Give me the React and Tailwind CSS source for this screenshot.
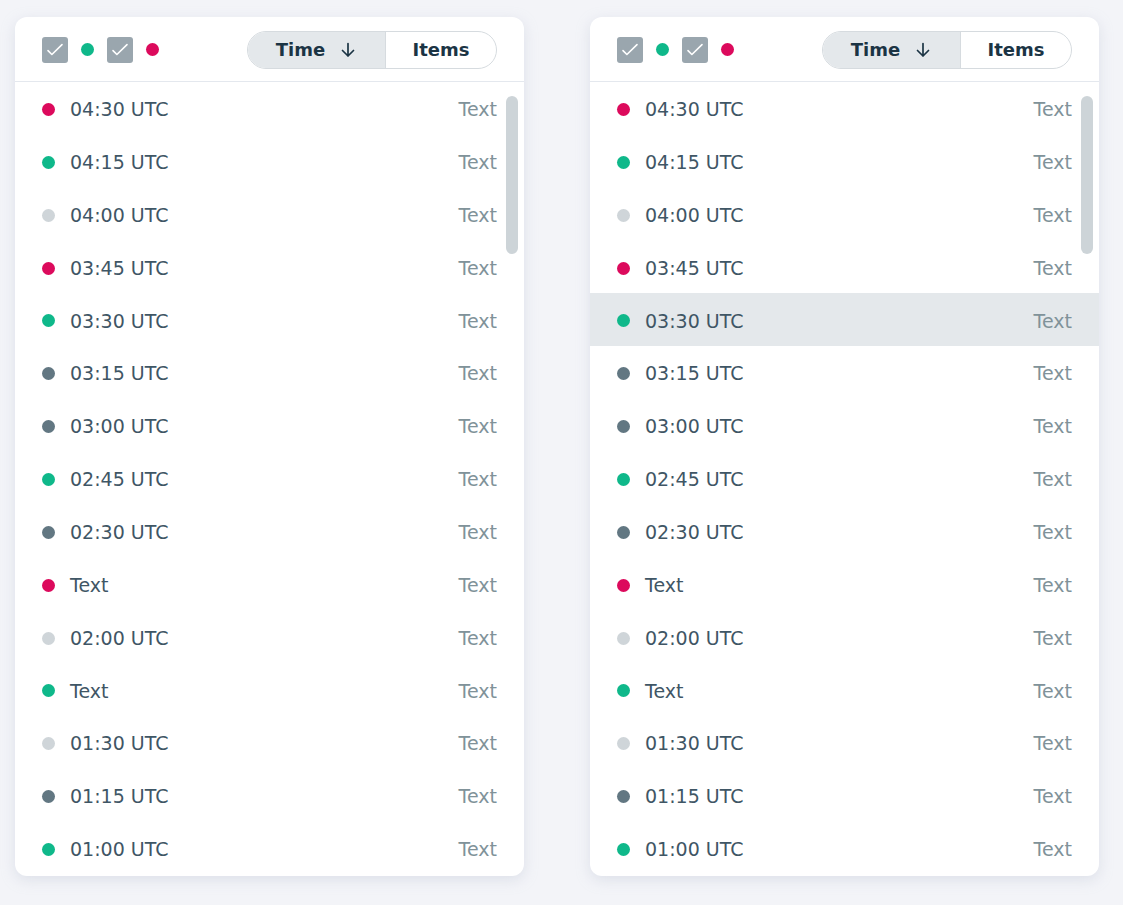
import React from 'react';

const DOT = {
  red: 'bg-[#dc0a5c]',
  green: 'bg-[#0fb88a]',
  light: 'bg-[#cfd5d9]',
  dark: 'bg-[#627782]',
};

const rows = [
  ['red', '04:30 UTC'],
  ['green', '04:15 UTC'],
  ['light', '04:00 UTC'],
  ['red', '03:45 UTC'],
  ['green', '03:30 UTC'],
  ['dark', '03:15 UTC'],
  ['dark', '03:00 UTC'],
  ['green', '02:45 UTC'],
  ['dark', '02:30 UTC'],
  ['red', 'Text'],
  ['light', '02:00 UTC'],
  ['green', 'Text'],
  ['light', '01:30 UTC'],
  ['dark', '01:15 UTC'],
  ['green', '01:00 UTC'],
];

const Check = () => (
  <span className="w-[26px] h-[26px] rounded-[3px] bg-[#9aa6ae] flex items-center justify-center">
    <svg width="26" height="26" viewBox="0 0 26 26" fill="none">
      <path d="M6 13.6l3.9 3.9L20 7.6" stroke="white" strokeWidth="1.6" strokeLinecap="round" strokeLinejoin="round" />
    </svg>
  </span>
);

const Dot = ({ c }) => <span className={`w-[13px] h-[13px] rounded-full shrink-0 ${DOT[c]}`} />;

const Panel = ({ active }) => (
  <div className="w-[509px] h-[859px] bg-white rounded-[12px] shadow-[0_4px_14px_rgba(180,188,205,0.35)] flex flex-col overflow-hidden">
    <div className="h-[65px] shrink-0 border-b border-[#e4e8ee] flex items-center justify-between px-[27px] pt-[1px]">
      <div className="flex items-center gap-[13px]">
        <Check />
        <Dot c="green" />
        <Check />
        <Dot c="red" />
      </div>
      <div className="flex h-[38px] rounded-full border border-[#d6dbdf] overflow-hidden text-[18px] font-semibold text-[#1b3444]">
        <div className="w-[138px] bg-[#e4e8eb] border-r border-[#d6dbdf] flex items-center justify-center gap-[14px]">
          <span>Time</span>
          <svg width="18" height="18" viewBox="0 0 18 18" fill="none">
            <path d="M9 2.5v12.5M3.5 9.5L9 15l5.5-5.5" stroke="#1b3444" strokeWidth="1.7" strokeLinecap="round" strokeLinejoin="round" />
          </svg>
        </div>
        <div className="w-[110px] flex items-center justify-center">Items</div>
      </div>
    </div>
    <div className="relative flex-1 overflow-hidden">
      {rows.map(([c, label], i) => (
        <div
          key={i}
          className={`h-[52.86px] flex items-center px-[27px] pt-[2px] ${active && i === 4 ? 'bg-[#e4e8eb]' : ''}`}
        >
          <Dot c={c} />
          <span className="ml-[15px] text-[19px] text-[#3f5665]">{label}</span>
          <span className="ml-auto text-[19px] text-[#809299]">Text</span>
        </div>
      ))}
      <div className="absolute right-[6px] top-[14px] w-[12px] h-[158px] rounded-full bg-[#cdd4d8]" />
    </div>
  </div>
);

export default function App() {
  return (
    <div
      className="w-[1123px] h-[905px] bg-[#f3f4f8] flex gap-[66px] pl-[15px] pt-[17px]"
      style={{ fontFamily: '"DejaVu Sans", sans-serif' }}
    >
      <Panel />
      <Panel active />
    </div>
  );
}
